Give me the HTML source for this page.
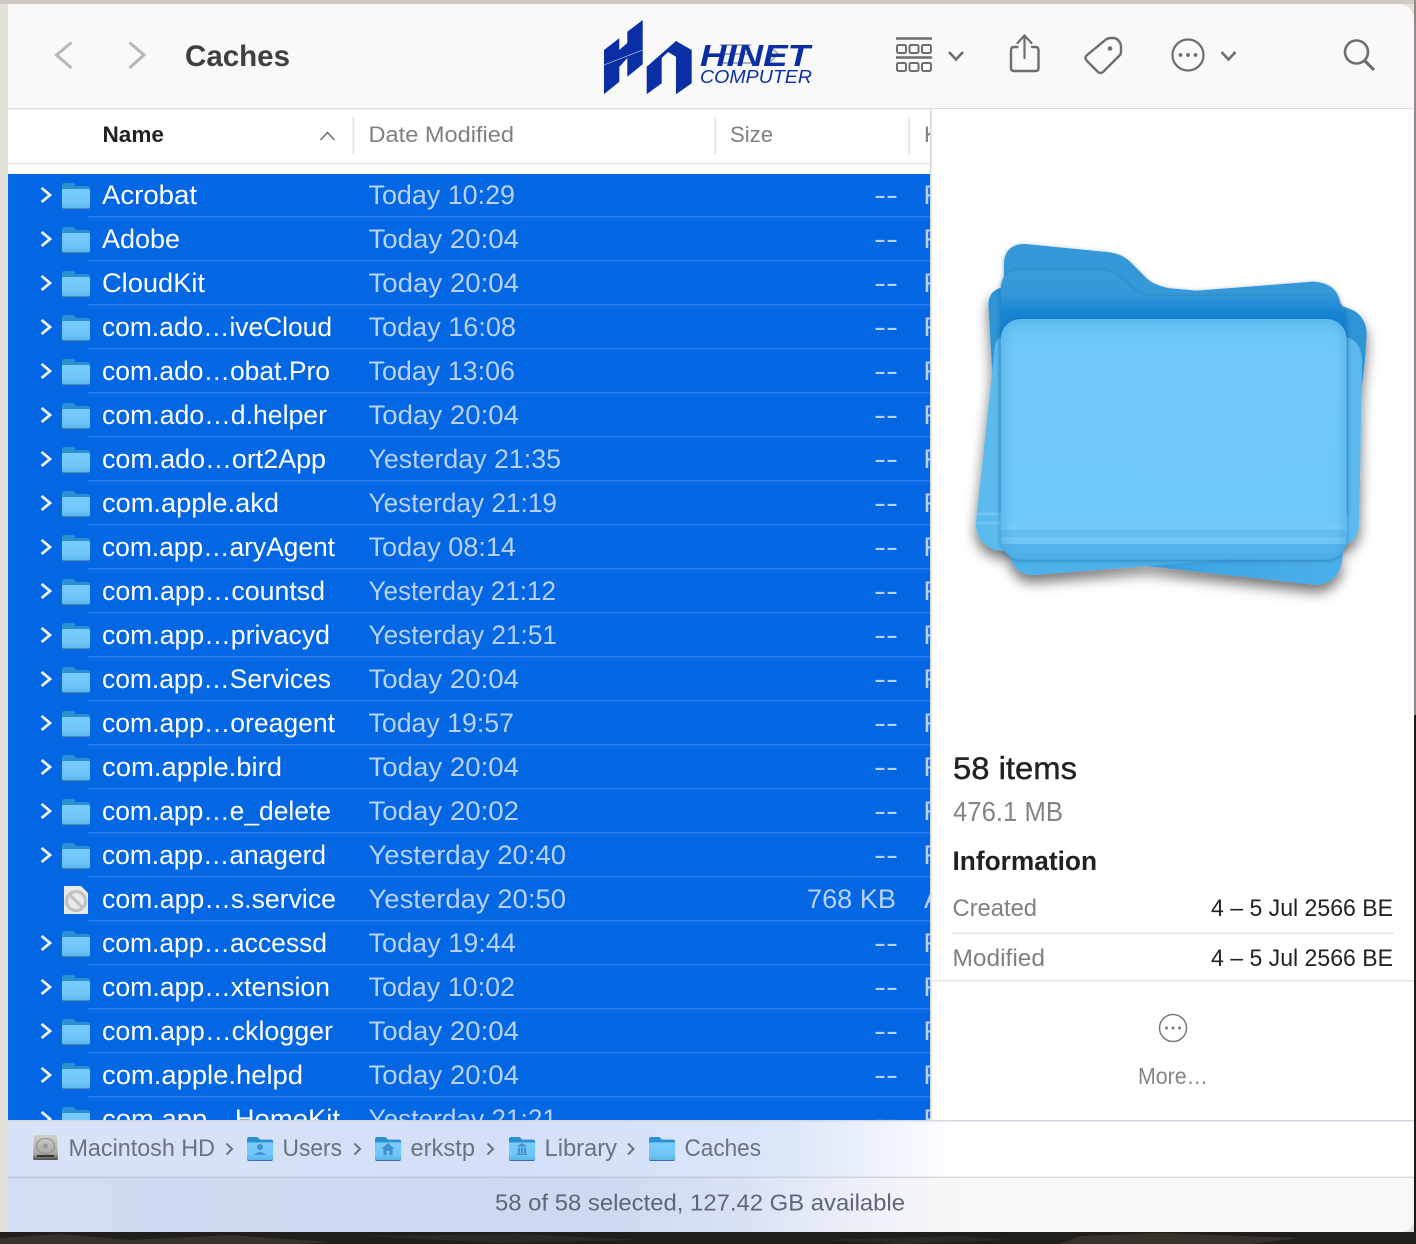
<!DOCTYPE html>
<html lang="en">
<head>
<meta charset="utf-8">
<title>Caches</title>
<style>
html,body{margin:0;padding:0;width:1416px;height:1244px;overflow:hidden;background:#e4e1da}
svg{display:block;position:absolute;left:0;top:0}
text{font-family:"Liberation Sans",sans-serif;white-space:pre}
.n{font-size:27px;fill:#fff}
.d{font-size:27px;fill:#b7d0f6}
.k{font-size:27px;fill:#b7d0f6}
.h{font-size:22.5px;fill:#808080}
.p{font-size:24px;fill:#6c7280}
.l{font-size:24px;fill:#808080}
.v{font-size:24px;fill:#222}
</style>
</head>
<body>
<svg width="1416" height="1244" viewBox="0 0 1416 1244" xmlns="http://www.w3.org/2000/svg">
<defs>
<linearGradient id="barP" x1="0" x2="1" y1="0" y2="0">
<stop offset="0" stop-color="#d9e3f8"/><stop offset=".35" stop-color="#d3e0f8"/><stop offset=".55" stop-color="#dbe6f9"/><stop offset=".62" stop-color="#eef3fc"/><stop offset=".68" stop-color="#fff"/>
</linearGradient>
<linearGradient id="barS" x1="0" x2="1" y1="0" y2="0">
<stop offset="0" stop-color="#d2dcf3"/><stop offset=".42" stop-color="#ced9f2"/><stop offset=".52" stop-color="#d9e2f5"/><stop offset=".62" stop-color="#eff2f9"/><stop offset=".68" stop-color="#f8f8f8"/>
</linearGradient>
<linearGradient id="barL" x1="0" x2="1" y1="0" y2="0">
<stop offset="0" stop-color="#bfc6d8"/><stop offset=".5" stop-color="#c3cadb"/><stop offset=".68" stop-color="#dcdcdc"/>
</linearGradient>
<linearGradient id="fb" x1="0" x2="0" y1="0" y2="1"><stop offset="0" stop-color="#7acdfb"/><stop offset=".75" stop-color="#6ec5f7"/><stop offset="1" stop-color="#58b6ea"/></linearGradient>
<linearGradient id="bigBack" x1="0" x2="0" y1="0" y2="1"><stop offset="0" stop-color="#3b9cd9"/><stop offset=".1" stop-color="#3498d9"/><stop offset=".18" stop-color="#1483d3"/></linearGradient>
<linearGradient id="bigFront" x1="0" x2="0" y1="0" y2="1"><stop offset="0" stop-color="#6ac5f6"/><stop offset=".15" stop-color="#6fc9f9"/><stop offset=".86" stop-color="#6ec8f9"/><stop offset="1" stop-color="#4fafe7"/></linearGradient>
<linearGradient id="lowR" x1="0" x2="1" y1="0" y2="0"><stop offset="0" stop-color="#2c8fd4"/><stop offset=".35" stop-color="#3ea5e4"/><stop offset="1" stop-color="#4cb0ea"/></linearGradient>
<linearGradient id="hd" x1="0" x2="0" y1="0" y2="1"><stop offset="0" stop-color="#cfcfcb"/><stop offset=".75" stop-color="#a8a8a4"/><stop offset="1" stop-color="#4e4e4c"/></linearGradient>
<filter id="sh" x="-15%" y="-15%" width="130%" height="130%"><feDropShadow dx="0" dy="22" stdDeviation="20" flood-color="#000" flood-opacity=".55"/></filter>
<filter id="sh2" x="-10%" y="-10%" width="120%" height="120%"><feDropShadow dx="0" dy="3" stdDeviation="7" flood-color="#04406e" flood-opacity=".45"/></filter>
<filter id="bl" x="-5%" y="-5%" width="110%" height="110%"><feGaussianBlur stdDeviation="14"/></filter>
<clipPath id="fr"><rect x="152" y="297" width="1038" height="722" rx="60"/></clipPath>
<g id="fold">
<rect x="0" y="3" width="28" height="23.5" rx="2" fill="#2a5f9c"/>
<path d="M0 7V2.5Q0 0 2.5 0H10Q12 0 13 1.5L14 3H25.5Q28 3 28 5.5V8H0Z" fill="#2b90d2"/>
<rect x="0" y="6" width="28" height="19.5" rx="1.6" fill="url(#fb)"/>
<rect x="0" y="21" width="28" height="1" fill="#63bdf0"/>
</g>
<path id="cv" d="M41.6-7L50 0L41.6 7" fill="none" stroke="#fff" stroke-width="2.7"/>
</defs>

<!-- surroundings -->
<rect width="1416" height="1244" fill="#e4e1da"/>
<rect width="1416" height="4" fill="#cfcac4"/>
<rect x="1414" y="0" width="2" height="715" fill="#8f8c85"/>
<rect x="1414" y="715" width="2" height="529" fill="#1c1b17"/>
<rect x="0" y="1232" width="1416" height="12" fill="#1f1e19"/>
<path d="M0 1238L60 1234L130 1240L230 1235L330 1242L300 1244H0ZM1080 1236L1160 1233L1300 1238L1250 1244H1060Z" fill="#35332b"/>
<path d="M360 1236L520 1234L640 1240L500 1243ZM820 1240L960 1236L1010 1240L900 1244Z" fill="#2b2a23"/>

<!-- window -->
<path d="M8 4H1396Q1414 4 1414 22V1217Q1414 1232 1399 1232H8Z" fill="#fff"/>
<path d="M8 4H1396Q1414 4 1414 22V108H8Z" fill="#f9f9f9"/>
<rect x="8" y="108" width="1406" height="1.5" fill="#dcdcdc"/>

<!-- header -->
<text x="102.500" y="142" font-size="22.500" font-weight="bold" fill="#222" textLength="61.500" lengthAdjust="spacingAndGlyphs">Name</text>
<path d="M320.500 140L327.500 132.500L334.500 140" fill="none" stroke="#6e6e6e" stroke-width="1.600"/>
<rect x="352.500" y="117" width="1.500" height="37" fill="#e3e3e3"/>
<rect x="714.500" y="117" width="1.500" height="37" fill="#e3e3e3"/>
<rect x="908.500" y="117" width="1.500" height="37" fill="#e3e3e3"/>
<text class="h" x="368.500" y="142" textLength="145.500" lengthAdjust="spacingAndGlyphs">Date Modified</text>
<text class="h" x="730" y="142" textLength="43" lengthAdjust="spacingAndGlyphs">Size</text>
<text class="h" x="924" y="142">Kind</text>
<rect x="8" y="163" width="923" height="1.500" fill="#e4e4e4"/>

<!-- selection -->
<rect x="8" y="174" width="923" height="946" fill="#0366e3"/>
<g fill="#2b7ceb">
<rect x="88" y="216" width="843" height="1.500"/><rect x="88" y="260" width="843" height="1.500"/><rect x="88" y="304" width="843" height="1.500"/><rect x="88" y="348" width="843" height="1.500"/><rect x="88" y="392" width="843" height="1.500"/><rect x="88" y="436" width="843" height="1.500"/><rect x="88" y="480" width="843" height="1.500"/><rect x="88" y="524" width="843" height="1.500"/><rect x="88" y="568" width="843" height="1.500"/><rect x="88" y="612" width="843" height="1.500"/><rect x="88" y="656" width="843" height="1.500"/><rect x="88" y="700" width="843" height="1.500"/><rect x="88" y="744" width="843" height="1.500"/><rect x="88" y="788" width="843" height="1.500"/><rect x="88" y="832" width="843" height="1.500"/><rect x="88" y="876" width="843" height="1.500"/><rect x="88" y="920" width="843" height="1.500"/><rect x="88" y="964" width="843" height="1.500"/><rect x="88" y="1008" width="843" height="1.500"/><rect x="88" y="1052" width="843" height="1.500"/><rect x="88" y="1096" width="843" height="1.500"/>
</g>

<!-- chevrons -->
<use href="#cv" y="195"/><use href="#cv" y="239"/><use href="#cv" y="283"/><use href="#cv" y="327"/><use href="#cv" y="371"/><use href="#cv" y="415"/><use href="#cv" y="459"/><use href="#cv" y="503"/><use href="#cv" y="547"/><use href="#cv" y="591"/><use href="#cv" y="635"/><use href="#cv" y="679"/><use href="#cv" y="723"/><use href="#cv" y="767"/><use href="#cv" y="811"/><use href="#cv" y="855"/><use href="#cv" y="943"/><use href="#cv" y="987"/><use href="#cv" y="1031"/><use href="#cv" y="1075"/><use href="#cv" y="1119"/>

<!-- folder icons -->
<use href="#fold" x="62" y="183"/><use href="#fold" x="62" y="227"/><use href="#fold" x="62" y="271"/><use href="#fold" x="62" y="315"/><use href="#fold" x="62" y="359"/><use href="#fold" x="62" y="403"/><use href="#fold" x="62" y="447"/><use href="#fold" x="62" y="491"/><use href="#fold" x="62" y="535"/><use href="#fold" x="62" y="579"/><use href="#fold" x="62" y="623"/><use href="#fold" x="62" y="667"/><use href="#fold" x="62" y="711"/><use href="#fold" x="62" y="755"/><use href="#fold" x="62" y="799"/><use href="#fold" x="62" y="843"/><use href="#fold" x="62" y="931"/><use href="#fold" x="62" y="975"/><use href="#fold" x="62" y="1019"/><use href="#fold" x="62" y="1063"/><use href="#fold" x="62" y="1107"/>

<!-- service doc icon -->
<path d="M64 886H81L88 893V914H64Z" fill="#eaeaea"/>
<circle cx="76" cy="901" r="9.500" fill="none" stroke="#c2c2c2" stroke-width="3.200"/>
<path d="M69.500 894.500L82.500 907.500" stroke="#c2c2c2" stroke-width="3.200"/>

<!-- names -->
<text class="n" x="102" y="204" textLength="95" lengthAdjust="spacingAndGlyphs">Acrobat</text>
<text class="n" x="102" y="248" textLength="78" lengthAdjust="spacingAndGlyphs">Adobe</text>
<text class="n" x="102" y="292" textLength="103" lengthAdjust="spacingAndGlyphs">CloudKit</text>
<text class="n" x="102" y="336" textLength="230" lengthAdjust="spacingAndGlyphs">com.ado…iveCloud</text>
<text class="n" x="102" y="380" textLength="228" lengthAdjust="spacingAndGlyphs">com.ado…obat.Pro</text>
<text class="n" x="102" y="424" textLength="225" lengthAdjust="spacingAndGlyphs">com.ado…d.helper</text>
<text class="n" x="102" y="468" textLength="224" lengthAdjust="spacingAndGlyphs">com.ado…ort2App</text>
<text class="n" x="102" y="512" textLength="177" lengthAdjust="spacingAndGlyphs">com.apple.akd</text>
<text class="n" x="102" y="556" textLength="233" lengthAdjust="spacingAndGlyphs">com.app…aryAgent</text>
<text class="n" x="102" y="600" textLength="223" lengthAdjust="spacingAndGlyphs">com.app…countsd</text>
<text class="n" x="102" y="644" textLength="228" lengthAdjust="spacingAndGlyphs">com.app…privacyd</text>
<text class="n" x="102" y="688" textLength="229" lengthAdjust="spacingAndGlyphs">com.app…Services</text>
<text class="n" x="102" y="732" textLength="233" lengthAdjust="spacingAndGlyphs">com.app…oreagent</text>
<text class="n" x="102" y="776" textLength="180" lengthAdjust="spacingAndGlyphs">com.apple.bird</text>
<text class="n" x="102" y="820" textLength="229" lengthAdjust="spacingAndGlyphs">com.app…e_delete</text>
<text class="n" x="102" y="864" textLength="224" lengthAdjust="spacingAndGlyphs">com.app…anagerd</text>
<text class="n" x="102" y="908" textLength="234" lengthAdjust="spacingAndGlyphs">com.app…s.service</text>
<text class="n" x="102" y="952" textLength="225" lengthAdjust="spacingAndGlyphs">com.app…accessd</text>
<text class="n" x="102" y="996" textLength="228" lengthAdjust="spacingAndGlyphs">com.app…xtension</text>
<text class="n" x="102" y="1040" textLength="231" lengthAdjust="spacingAndGlyphs">com.app…cklogger</text>
<text class="n" x="102" y="1084" textLength="201" lengthAdjust="spacingAndGlyphs">com.apple.helpd</text>
<text class="n" x="102" y="1128" textLength="238" lengthAdjust="spacingAndGlyphs">com.app…HomeKit</text>

<!-- dates -->
<text class="d" x="368.500" y="204" textLength="146.500" lengthAdjust="spacingAndGlyphs">Today 10:29</text>
<text class="d" x="368.500" y="248" textLength="150.500" lengthAdjust="spacingAndGlyphs">Today 20:04</text>
<text class="d" x="368.500" y="292" textLength="150.500" lengthAdjust="spacingAndGlyphs">Today 20:04</text>
<text class="d" x="368.500" y="336" textLength="147.500" lengthAdjust="spacingAndGlyphs">Today 16:08</text>
<text class="d" x="368.500" y="380" textLength="146.500" lengthAdjust="spacingAndGlyphs">Today 13:06</text>
<text class="d" x="368.500" y="424" textLength="150.500" lengthAdjust="spacingAndGlyphs">Today 20:04</text>
<text class="d" x="368.500" y="468" textLength="192.500" lengthAdjust="spacingAndGlyphs">Yesterday 21:35</text>
<text class="d" x="368.500" y="512" textLength="188.500" lengthAdjust="spacingAndGlyphs">Yesterday 21:19</text>
<text class="d" x="368.500" y="556" textLength="147.500" lengthAdjust="spacingAndGlyphs">Today 08:14</text>
<text class="d" x="368.500" y="600" textLength="187.500" lengthAdjust="spacingAndGlyphs">Yesterday 21:12</text>
<text class="d" x="368.500" y="644" textLength="188.500" lengthAdjust="spacingAndGlyphs">Yesterday 21:51</text>
<text class="d" x="368.500" y="688" textLength="150.500" lengthAdjust="spacingAndGlyphs">Today 20:04</text>
<text class="d" x="368.500" y="732" textLength="145.500" lengthAdjust="spacingAndGlyphs">Today 19:57</text>
<text class="d" x="368.500" y="776" textLength="150.500" lengthAdjust="spacingAndGlyphs">Today 20:04</text>
<text class="d" x="368.500" y="820" textLength="150.500" lengthAdjust="spacingAndGlyphs">Today 20:02</text>
<text class="d" x="368.500" y="864" textLength="197.500" lengthAdjust="spacingAndGlyphs">Yesterday 20:40</text>
<text class="d" x="368.500" y="908" textLength="197.500" lengthAdjust="spacingAndGlyphs">Yesterday 20:50</text>
<text class="d" x="368.500" y="952" textLength="147.500" lengthAdjust="spacingAndGlyphs">Today 19:44</text>
<text class="d" x="368.500" y="996" textLength="146.500" lengthAdjust="spacingAndGlyphs">Today 10:02</text>
<text class="d" x="368.500" y="1040" textLength="150.500" lengthAdjust="spacingAndGlyphs">Today 20:04</text>
<text class="d" x="368.500" y="1084" textLength="150.500" lengthAdjust="spacingAndGlyphs">Today 20:04</text>
<text class="d" x="368.500" y="1128" textLength="188.500" lengthAdjust="spacingAndGlyphs">Yesterday 21:21</text>

<!-- sizes -->
<g>
<text class="k" x="874" y="204" textLength="24" lengthAdjust="spacingAndGlyphs">--</text><text class="k" x="874" y="248" textLength="24" lengthAdjust="spacingAndGlyphs">--</text><text class="k" x="874" y="292" textLength="24" lengthAdjust="spacingAndGlyphs">--</text><text class="k" x="874" y="336" textLength="24" lengthAdjust="spacingAndGlyphs">--</text><text class="k" x="874" y="380" textLength="24" lengthAdjust="spacingAndGlyphs">--</text><text class="k" x="874" y="424" textLength="24" lengthAdjust="spacingAndGlyphs">--</text><text class="k" x="874" y="468" textLength="24" lengthAdjust="spacingAndGlyphs">--</text><text class="k" x="874" y="512" textLength="24" lengthAdjust="spacingAndGlyphs">--</text><text class="k" x="874" y="556" textLength="24" lengthAdjust="spacingAndGlyphs">--</text><text class="k" x="874" y="600" textLength="24" lengthAdjust="spacingAndGlyphs">--</text><text class="k" x="874" y="644" textLength="24" lengthAdjust="spacingAndGlyphs">--</text><text class="k" x="874" y="688" textLength="24" lengthAdjust="spacingAndGlyphs">--</text><text class="k" x="874" y="732" textLength="24" lengthAdjust="spacingAndGlyphs">--</text><text class="k" x="874" y="776" textLength="24" lengthAdjust="spacingAndGlyphs">--</text><text class="k" x="874" y="820" textLength="24" lengthAdjust="spacingAndGlyphs">--</text><text class="k" x="874" y="864" textLength="24" lengthAdjust="spacingAndGlyphs">--</text>
<text class="k" x="807" y="908" textLength="89" lengthAdjust="spacingAndGlyphs">768 KB</text>
<text class="k" x="874" y="952" textLength="24" lengthAdjust="spacingAndGlyphs">--</text><text class="k" x="874" y="996" textLength="24" lengthAdjust="spacingAndGlyphs">--</text><text class="k" x="874" y="1040" textLength="24" lengthAdjust="spacingAndGlyphs">--</text><text class="k" x="874" y="1084" textLength="24" lengthAdjust="spacingAndGlyphs">--</text><text class="k" x="874" y="1128" textLength="24" lengthAdjust="spacingAndGlyphs">--</text>
</g>

<!-- kind (clipped by the inspector) -->
<g>
<text class="k" x="923.500" y="204">Folder</text><text class="k" x="923.500" y="248">Folder</text><text class="k" x="923.500" y="292">Folder</text><text class="k" x="923.500" y="336">Folder</text><text class="k" x="923.500" y="380">Folder</text><text class="k" x="923.500" y="424">Folder</text><text class="k" x="923.500" y="468">Folder</text><text class="k" x="923.500" y="512">Folder</text><text class="k" x="923.500" y="556">Folder</text><text class="k" x="923.500" y="600">Folder</text><text class="k" x="923.500" y="644">Folder</text><text class="k" x="923.500" y="688">Folder</text><text class="k" x="923.500" y="732">Folder</text><text class="k" x="923.500" y="776">Folder</text><text class="k" x="923.500" y="820">Folder</text><text class="k" x="923.500" y="864">Folder</text><text class="k" x="924" y="908">Alias</text><text class="k" x="923.500" y="952">Folder</text><text class="k" x="923.500" y="996">Folder</text><text class="k" x="923.500" y="1040">Folder</text><text class="k" x="923.500" y="1084">Folder</text><text class="k" x="923.500" y="1128">Folder</text>
</g>

<!-- inspector -->
<path d="M931 109H1414V1120H931Z" fill="#fff"/>
<rect x="930" y="109" width="1.600" height="1011" fill="#d8d8d8"/>

<svg x="950" y="220" width="440" height="390" viewBox="0 0 1320 1170">
<g filter="url(#sh)">
<path d="M115 250Q118 205 170 200L1170 258Q1250 272 1250 345L1245 420L1190 880H150Z" fill="#2f95d6"/>
<path d="M135 375Q140 350 175 350H1170Q1232 350 1236 420L1228 905Q1228 960 1180 980L1000 1000H200L130 988Q75 965 78 905Z" fill="#5cbbee"/>
<rect x="80" y="878" width="75" height="8" fill="#74c6f2"/>
<rect x="78" y="905" width="75" height="8" fill="#74c6f2"/>
<path d="M560 1015L1178 1000Q1178 1085 1100 1095L520 1030Z" fill="url(#lowR)"/>
<path d="M178 1000L820 1020L250 1065Q190 1065 178 1000Z" fill="#4eb2ea"/>
</g>
<g filter="url(#sh2)">
<path d="M162 130Q165 72 225 72L480 97Q520 103 545 130L590 175Q610 195 660 205L740 212L1090 185Q1160 190 1170 245L1180 600H165Z" fill="#3499d9"/>
</g>
<g filter="url(#sh2)">
<path d="M152 210Q152 150 212 150H440Q485 150 515 178L555 212Q572 228 600 228H1120Q1188 232 1190 310V880H152Z" fill="url(#bigBack)"/>
</g>
<g filter="url(#sh2)">
<rect x="152" y="297" width="1038" height="722" rx="60" fill="url(#bigFront)"/>
</g>
<g clip-path="url(#fr)">
<rect x="154" y="909" width="1034" height="21" fill="#74caf7"/>
<rect x="154" y="930" width="1034" height="21" fill="#62bdf0"/>
<rect x="154" y="951" width="1034" height="21" fill="#70c7f4"/>
<rect x="154" y="972" width="1034" height="47" fill="#54b3ea"/>
<rect x="150" y="295" width="1042" height="726" rx="60" fill="none" stroke="#3f9fd9" stroke-width="16" filter="url(#bl)" opacity=".7"/>
</g>
</svg>

<text x="953" y="779" font-size="31.500" fill="#222" stroke="#222" stroke-width=".4" textLength="124" lengthAdjust="spacingAndGlyphs">58 items</text>
<text x="953" y="821" font-size="27.500" fill="#858585" textLength="110" lengthAdjust="spacingAndGlyphs">476.1 MB</text>
<text x="952.500" y="870" font-size="27" font-weight="bold" fill="#222" textLength="144.500" lengthAdjust="spacingAndGlyphs">Information</text>
<text class="l" x="952.500" y="916" textLength="84.500" lengthAdjust="spacingAndGlyphs">Created</text>
<text class="v" x="1211" y="916" textLength="182" lengthAdjust="spacingAndGlyphs">4 – 5 Jul 2566 BE</text>
<rect x="952" y="932.500" width="442" height="1.500" fill="#e5e5e5"/>
<text class="l" x="952.500" y="966" textLength="92.500" lengthAdjust="spacingAndGlyphs">Modified</text>
<text class="v" x="1211" y="966" textLength="182" lengthAdjust="spacingAndGlyphs">4 – 5 Jul 2566 BE</text>
<rect x="932" y="980" width="482" height="1.500" fill="#e5e5e5"/>
<circle cx="1173" cy="1028" r="13.500" fill="none" stroke="#7c7c7c" stroke-width="1.500"/>
<circle cx="1166.500" cy="1028" r="1.500" fill="#7c7c7c"/><circle cx="1173" cy="1028" r="1.500" fill="#7c7c7c"/><circle cx="1179.500" cy="1028" r="1.500" fill="#7c7c7c"/>
<text x="1138" y="1084" font-size="23" fill="#858585" textLength="70" lengthAdjust="spacingAndGlyphs">More…</text>

<!-- path bar -->
<rect x="8" y="1120" width="1406" height="56.500" fill="url(#barP)"/>
<rect x="8" y="1120" width="1406" height="1.500" fill="#d4d7e0"/>
<path d="M8 1178H1414V1217Q1414 1232 1399 1232H8Z" fill="url(#barS)"/>
<rect x="8" y="1176.500" width="1406" height="1.500" fill="url(#barL)"/>

<path d="M36 1135H55Q57 1135 57 1137L58 1159Q58 1160 56 1160H35Q33 1160 33 1159L34 1137Q34 1135 36 1135Z" fill="url(#hd)"/>
<ellipse cx="45.500" cy="1146" rx="9" ry="7.500" fill="none" stroke="#8e8e8a" stroke-width="1"/>
<circle cx="45.500" cy="1146" r="2.500" fill="#9a9a96"/>
<rect x="37" y="1155" width="17" height="2" fill="#333"/>
<text class="p" x="68.500" y="1156" textLength="146.500" lengthAdjust="spacingAndGlyphs">Macintosh HD</text>
<path d="M226.500 1143.500L232 1149L226.500 1154.500" fill="none" stroke="#6c7280" stroke-width="2"/>
<g transform="translate(247 1137) scale(.93 .9)"><use href="#fold"/></g>
<circle cx="260" cy="1147" r="3" fill="#3f90cf"/><path d="M254 1155Q260 1149 266 1155Z" fill="#3f90cf"/>
<text class="p" x="282.500" y="1156" textLength="59.500" lengthAdjust="spacingAndGlyphs">Users</text>
<path d="M354.500 1143.500L360 1149L354.500 1154.500" fill="none" stroke="#6c7280" stroke-width="2"/>
<g transform="translate(375 1137) scale(.93 .9)"><use href="#fold"/></g>
<path d="M388 1143L394.500 1149H392.500V1155H389.500V1151H386.500V1155H383.500V1149H381.500Z" fill="#3f90cf"/>
<text class="p" x="410.500" y="1156" textLength="64.500" lengthAdjust="spacingAndGlyphs">erkstp</text>
<path d="M487.500 1143.500L493 1149L487.500 1154.500" fill="none" stroke="#6c7280" stroke-width="2"/>
<g transform="translate(509 1137) scale(.93 .9)"><use href="#fold"/></g>
<path d="M522 1143L527 1146.500H517ZM518 1147.500H520V1153H518ZM521 1147.500H523V1153H521ZM524 1147.500H526V1153H524ZM517 1153.500H527V1155H517Z" fill="#3f90cf"/>
<text class="p" x="544.500" y="1156" textLength="72.500" lengthAdjust="spacingAndGlyphs">Library</text>
<path d="M628 1143.500L633.500 1149L628 1154.500" fill="none" stroke="#6c7280" stroke-width="2"/>
<g transform="translate(649 1137) scale(.93 .9)"><use href="#fold"/></g>
<text class="p" x="684.500" y="1156" textLength="76.500" lengthAdjust="spacingAndGlyphs">Caches</text>

<text x="495" y="1210.500" font-size="23.500" fill="#5f6679" textLength="410" lengthAdjust="spacingAndGlyphs">58 of 58 selected, 127.42 GB available</text>

<!-- toolbar -->
<path d="M71.500 42.500L56.500 55L71.500 68" fill="none" stroke="#b8b8b8" stroke-width="3"/>
<path d="M129.500 42.500L144 55L129.500 68" fill="none" stroke="#b8b8b8" stroke-width="3"/>
<text x="185" y="66" font-size="29.500" font-weight="bold" fill="#404040" textLength="105" lengthAdjust="spacingAndGlyphs">Caches</text>

<!-- logo -->
<g fill="none" stroke="#8a8a8a" stroke-width="2" opacity=".65">
<path d="M720 45H751M720 54H751M720 63H751M770 46L778 54L770 62"/>
</g>
<g fill="#0a2fa5">
<path d="M604 50L619.300 38.300V50L627.300 43V31.700L642.700 20V64.300L627.300 76.700V58L619.300 67V81.700L604 94.300Z"/>
<path d="M646.700 66.700L676 41L691.700 50V83.300L676 94.300V56.700L668 52L661.700 58V83.300L646.700 94.300Z"/>
</g>
<path d="M604 65L642.700 50" stroke="#dfe4f4" stroke-width=".6"/>
<text x="700" y="66" font-size="31" font-weight="bold" font-style="italic" fill="#0a2fa5" textLength="110" lengthAdjust="spacingAndGlyphs">HINET</text>
<text x="700" y="83" font-size="18" font-style="italic" fill="#0a2fa5" textLength="112" lengthAdjust="spacingAndGlyphs">COMPUTER</text>

<!-- view icon -->
<g fill="none" stroke="#6e6e6e" stroke-width="2">
<rect x="897" y="45" width="9" height="8" rx="1.500"/><rect x="909.500" y="45" width="9" height="8" rx="1.500"/><rect x="922" y="45" width="9" height="8" rx="1.500"/>
<rect x="897" y="63" width="9" height="8" rx="1.500"/><rect x="909.500" y="63" width="9" height="8" rx="1.500"/><rect x="922" y="63" width="9" height="8" rx="1.500"/>
<path d="M896 38.500H932M896 57.500H932" stroke-width="2.400"/>
</g>
<path d="M949 52L956 59.500L963 52" fill="none" stroke="#6e6e6e" stroke-width="2.600"/>
<!-- share -->
<path d="M1017.500 47H1014Q1011 47 1011 50V68Q1011 71 1014 71H1035.500Q1038.500 71 1038.500 68V50Q1038.500 47 1035.500 47H1032" fill="none" stroke="#6e6e6e" stroke-width="2.400" stroke-linecap="round"/>
<path d="M1024.500 58V36M1017.500 43L1024.500 35.500L1031.500 43" fill="none" stroke="#6e6e6e" stroke-width="2.200" stroke-linecap="round"/>
<!-- tag -->
<path d="M1086.500 55.500L1106 39.500Q1108 38 1110.500 38H1113.500Q1116 38 1118 40L1119.500 42Q1121 44 1121 46.500V52Q1121 54 1119.500 55.500L1103 72Q1100.500 74 1098 72L1086.500 60.500Q1084.500 58 1086.500 55.500Z" fill="none" stroke="#6e6e6e" stroke-width="2.400"/>
<circle cx="1110" cy="48.500" r="2.300" fill="#6e6e6e"/>
<!-- more -->
<circle cx="1188" cy="55" r="15.500" fill="none" stroke="#6e6e6e" stroke-width="2.200"/>
<circle cx="1180.500" cy="55" r="1.900" fill="#6e6e6e"/><circle cx="1188" cy="55" r="1.900" fill="#6e6e6e"/><circle cx="1195.500" cy="55" r="1.900" fill="#6e6e6e"/>
<path d="M1221.500 52L1228.500 59.500L1235.500 52" fill="none" stroke="#6e6e6e" stroke-width="2.600"/>
<!-- search -->
<circle cx="1356.500" cy="52" r="11.500" fill="none" stroke="#6e6e6e" stroke-width="2.600"/>
<path d="M1365 61L1374 70" fill="none" stroke="#6e6e6e" stroke-width="3.200"/>
</svg>
</body>
</html>
